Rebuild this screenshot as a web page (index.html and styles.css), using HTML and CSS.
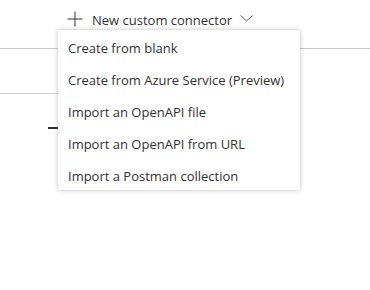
FILE: index.html
```html
<!DOCTYPE html>
<html lang="en">
<head>
    <meta charset="UTF-8">
    <meta name="viewport" content="width=device-width, initial-scale=1.0">
    <title>Custom connectors</title>
    <link rel="stylesheet" href="styles.css">
</head>
<body>
    <div class="page">
        <div class="command-bar">
            <button class="command">
                <svg class="plus" width="16" height="16" viewBox="0 0 16 16">
                    <path d="M8 0.5V15.5M0.5 8H15.5" stroke="#323130" stroke-width="1" fill="none"/>
                </svg>
                <span class="label">New custom connector</span>
                <svg class="chevron" width="13" height="7" viewBox="0 0 13 7">
                    <path d="M0.5 0.5L6.5 6L12.5 0.5" stroke="#605e5c" stroke-width="1" fill="none"/>
                </svg>
            </button>
        </div>
        <div class="divider"></div>
        <div class="divider short"></div>
        <div class="tab-line"></div>

        <ul class="menu">
            <li>Create from blank</li>
            <li>Create from Azure Service (Preview)</li>
            <li>Import an OpenAPI file</li>
            <li>Import an OpenAPI from URL</li>
            <li>Import a Postman collection</li>
        </ul>
    </div>
</body>
</html>
```

FILE: styles.css
```css
body {
    margin: 0;
    background-color: #ffffff;
    font-family: "Segoe UI", "Open Sans", sans-serif;
    color: #323130;
}
.page {
    position: relative;
    height: 290px;
}
.command-bar {
    height: 38px;
    padding-left: 67px;
    display: flex;
    align-items: center;
}
.command {
    display: flex;
    align-items: center;
    background: none;
    border: none;
    padding: 0;
    font: inherit;
    font-size: 13px;
    color: #323130;
}
.plus {
    margin-right: 9px;
}
.label {
    margin-top: 2px;
}
.chevron {
    margin-left: 8px;
    margin-top: -2px;
}
.divider {
    height: 1px;
    background-color: #c8c6c4;
    margin-top: 10px;
}
.divider.short {
    width: 200px;
    margin-top: 44px;
    background-color: #d2d0ce;
}
.tab-line {
    width: 40px;
    height: 2px;
    margin: 33px 0 0 48px;
    background-color: #323130;
}
.menu {
    position: absolute;
    top: 30px;
    left: 58px;
    width: 242px;
    margin: 0;
    padding: 0;
    list-style: none;
    background-color: #ffffff;
    box-shadow: 0 0 5px rgba(0, 0, 0, 0.22), 0 0 1px rgba(0, 0, 0, 0.15);
}
.menu li {
    height: 28px;
    line-height: 28px;
    padding: 4px 0 0 10px;
    font-size: 13px;
    white-space: nowrap;
}
```
